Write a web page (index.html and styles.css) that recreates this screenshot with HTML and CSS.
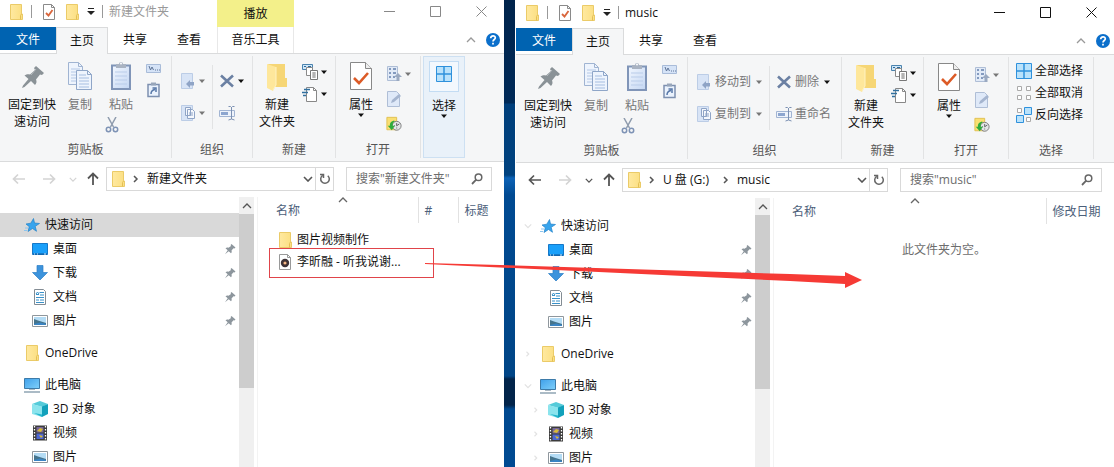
FILE: index.html
```html
<!DOCTYPE html>
<html lang="zh-CN">
<head>
    <meta charset="UTF-8">
    <meta name="viewport" content="width=device-width, initial-scale=1.0">
    <title>music</title>
    <link rel="stylesheet" href="styles.css">
</head>
<body>
    <svg class="sprite" aria-hidden="true">
        <defs>
            <linearGradient id="gFolder" x1="0" x2="1"><stop offset="0" stop-color="#ffe9a0"/><stop offset="1" stop-color="#fbdf82"/></linearGradient>
            <linearGradient id="gScreen" x1="0" x2="1" y2="1"><stop offset="0" stop-color="#3fa0ea"/><stop offset="1" stop-color="#7fd0fb"/></linearGradient>
            <linearGradient id="gClip" x1="0" x2="1" y2="1"><stop offset="0" stop-color="#f2f7ff"/><stop offset="1" stop-color="#c3d6f2"/></linearGradient>
        </defs>
        <symbol id="folder" viewBox="0 0 16 16">
            <path d="M2.500.5h11v9.500h1v5.500h-12z" fill="url(#gFolder)" stroke="#ebcb68"/>
            <path d="M12.500 15.500v-4l1-1.500" fill="none" stroke="#e3bf55"/>
        </symbol>
        <symbol id="check-doc" viewBox="0 0 16 16">
            <path d="M2.500.5h8l3 3v12h-11z" fill="#fff" stroke="#8a8a8a"/><path d="M10.500.5v3h3" fill="none" stroke="#8a8a8a"/>
            <path d="M5 9l2.500 2.500L11.500 6" fill="none" stroke="#d9663c" stroke-width="1.800"/>
        </symbol>
        <symbol id="customize" viewBox="0 0 8 8"><path d="M1 .5h6" stroke="#222"/><path d="M0 3h8L4 7z" fill="#222"/></symbol>
        <symbol id="caret" viewBox="0 0 6 4"><path d="M0 .5h6L3 4z" fill="currentColor"/></symbol>
        <symbol id="win-min" viewBox="0 0 11 11"><path d="M0 5.500h11" stroke="currentColor"/></symbol>
        <symbol id="win-max" viewBox="0 0 11 11"><path d="M.5.5h10v10H.5z" fill="none" stroke="currentColor"/></symbol>
        <symbol id="win-close" viewBox="0 0 11 11"><path d="M.5.5l10 10M10.500.5l-10 10" fill="none" stroke="currentColor"/></symbol>
        <symbol id="up-chev" viewBox="0 0 10 6"><path d="M1 5l4-4 4 4" fill="none" stroke="currentColor" stroke-width="1.300"/></symbol>
        <symbol id="down-chev" viewBox="0 0 10 6"><path d="M1 1l4 4 4-4" fill="none" stroke="currentColor" stroke-width="1.600"/></symbol>
        <symbol id="right-chev" viewBox="0 0 6 8"><path d="M1 1l3 3-3 3" fill="none" stroke="currentColor" stroke-width="1.500"/></symbol>
        <symbol id="pin-big" viewBox="0 0 32 32">
            <path d="M20 5l8 7-2 2-2-.5-4 5c1 2 .5 4-1 5.500l-4-4L8.500 26 6 27l1-2.500 5.500-6.500-4-3.500c2-1.500 4-1.500 5.500-1l5-4.500-1-2z" fill="#8a9297"/>
            <path d="M20 8l-5 6" stroke="#b5bbbf"/>
        </symbol>
        <symbol id="pin" viewBox="0 0 12 12"><path d="M7.500 1l4 3.500-1 1-1-.2-2 2.200c.4 1 .2 2-.5 2.800L4.700 8.200 1 11.300l2.700-4L1.500 5.200c1-.7 2-.8 3-.4L7 3l-.4-1z" fill="#8d969d"/></symbol>
        <symbol id="copy" viewBox="0 0 32 32">
            <g fill="#eef4fd" stroke="#a0b4d2"><path d="M4.500 1.500h10l4 4v18h-14z"/><path d="M14.500 1.500v4h4" fill="none"/></g>
            <path d="M7 8h9M7 11h9M7 14h9M7 17h9M7 20h9" stroke="#b4c8e6"/>
            <g fill="#eef4fd" stroke="#8fa6c8"><path d="M12.500 9.500h11l4 4v15h-15z"/><path d="M23.500 9.500v4h4" fill="none"/></g>
            <path d="M15 14h7M15 17h10M15 20h10M15 23h10M15 26h10" stroke="#a6bee1"/>
        </symbol>
        <symbol id="paste" viewBox="0 0 32 32">
            <path d="M7 4.500h18v23.500H7z" fill="url(#gClip)" stroke="#8095b8" stroke-width="2"/>
            <path d="M10 11h12M10 15h12M10 19h12M10 23h12" stroke="#b9cce9"/>
            <path d="M11 3h3a2 2 0 0 1 4 0h3v4H11z" fill="#a9b3c2"/><circle cx="16" cy="2.500" r="1" fill="#fff"/>
        </symbol>
        <symbol id="scissors" viewBox="0 0 16 16">
            <path d="M4 0l5.500 10M12 0L6.500 10" fill="none" stroke="#8e9bad" stroke-width="1.500"/>
            <circle cx="4.500" cy="12.500" r="2.200" fill="none" stroke="#7e93b5" stroke-width="1.500"/><circle cx="11.500" cy="12.500" r="2.200" fill="none" stroke="#7e93b5" stroke-width="1.500"/>
        </symbol>
        <symbol id="path" viewBox="0 0 16 16"><path d="M.5 3.500h14v8H.5z" fill="#d5e3f7" stroke="#a9bcd9"/><path d="M3 5l1.500 4L6 6l1.500 3M9 9h1M11 9h1M13 9h1" fill="none" stroke="#5f7597"/></symbol>
        <symbol id="shortcut" viewBox="0 0 16 16"><path d="M2 2.500h11v12H2z" fill="#eaf2fd" stroke="#7d90b0" stroke-width="1.500"/><path d="M5 .5h5v3H5z" fill="#98a6ba"/><path d="M5 12c0-3 1-4 4-4.500M6.500 6h3.500v4" fill="none" stroke="#5878a8" stroke-width="1.500"/></symbol>
        <symbol id="move-to" viewBox="0 0 16 16"><path d="M1.500.5h11v15h-11z" fill="#d8e4f6" stroke="#bccde6"/><path d="M14 9v3.500h-4V15L6 11l4-4v2z" fill="#8fa4c6"/></symbol>
        <symbol id="copy-to" viewBox="0 0 16 16"><path d="M1.500.5h11v15h-11z" fill="#d8e4f6" stroke="#bccde6"/><path d="M5.500 2.500h5v8h-5zM7.500 4.500h5l2 2v7h-7z" fill="#f5f8fd" stroke="#8fa4c6"/><path d="M9 8h4M9 10h4" stroke="#8fa4c6"/></symbol>
        <symbol id="delete" viewBox="0 0 16 16"><path d="M2 2.500l12 11M14 2.500l-12 11" stroke="#6b80a3" stroke-width="2.600"/></symbol>
        <symbol id="rename" viewBox="0 0 16 16"><path d="M.5 5.500h15v6H.5z" fill="#eef3fb" stroke="#a2b5d3"/><path d="M2 7h7v3H2z" fill="#8da6cf"/><path d="M9.500 1.500h2l1 1 1-1h2M12.500 2v12M9.500 15l3-1 3 1" fill="none" stroke="#7c91b3"/></symbol>
        <symbol id="new-folder" viewBox="0 0 32 32">
            <path d="M7 3h17v14h2v9H11z" fill="#f6d676"/><path d="M6 3l9 3v18l-3 6-6-3z" fill="#fee79b"/><path d="M15 6v18l-3 5" fill="none" stroke="#fff2c2"/>
        </symbol>
        <symbol id="new-item" viewBox="0 0 16 16"><path d="M.5.500h10v5H.5z" fill="#cfe6f8" stroke="#4a83ae"/><path d="M2 2.500h2M6 2.500h3" stroke="#2a6a9c"/><path d="M4.500 3.500h6v8h-6z" fill="#fff" stroke="#8a8a8a"/><path d="M8.500 6.500h7v9h-7z" fill="#fff" stroke="#777"/><path d="M10 9h4M10 11h4M10 13h4M12 8v6" stroke="#999"/></symbol>
        <symbol id="easy-access" viewBox="0 0 16 16"><path d="M4.500 15.500V1.500h7l3 3v11z" fill="#fff" stroke="#888"/><path d="M11.500 1.500v3h3" fill="none" stroke="#888"/><path d="M2 3.500h6M0 6.500h6M1 9.500h3" stroke="#31709f" stroke-width="1.300"/></symbol>
        <symbol id="props" viewBox="0 0 32 32"><path d="M5.500 1.500h15l6 6v21h-21z" fill="#fff" stroke="#888"/><path d="M20.500 1.500v6h6" fill="#eee" stroke="#888"/><path d="M9 17l5 5 9-10" fill="none" stroke="#dc5b27" stroke-width="2.600"/></symbol>
        <symbol id="open" viewBox="0 0 16 16"><path d="M1.500.5h10v14h-10z" fill="#e1eaf7" stroke="#afbed6"/><path d="M3 3h2M3 7h2M3 11h2M7 3h3M7 7h3M7 11h2" stroke="#839abf" stroke-width="2"/><path d="M12 7l4 4h-2.500v4h-3v-4H8z" fill="#9aa9c1"/></symbol>
        <symbol id="edit" viewBox="0 0 16 16"><path d="M1.500.5h9l3 3v12h-12z" fill="#dfe9f8" stroke="#afbed6"/><path d="M5 12l1-3 7-6 2 2-7 6z" fill="#a5b5cf"/></symbol>
        <symbol id="history" viewBox="0 0 18 16"><path d="M1 .5h11v14H1z" fill="#f9df72" stroke="#dfbd4c"/><circle cx="12" cy="10" r="5" fill="#e2e5e7" stroke="#777"/><path d="M12 7v3l3-2M9 10h1M12 13v-1" fill="none" stroke="#555"/><path d="M9 4c-4 1-5 4-4.500 6H2l4.500 5L10 10H7.500c0-3 .5-4 2.500-5z" fill="#2fab3c"/></symbol>
        <symbol id="sel-all" viewBox="0 0 16 16"><path d="M.5.5h7.500v7.500H.5zM8 .5h7.500v7.500H8zM.5 8h7.500v7.500H.5zM8 8h7.500v7.500H8z" fill="#b9e2fb" stroke="#2f91dc"/></symbol>
        <symbol id="sel-none" viewBox="0 0 16 16"><path d="M1.500 1.500h4v4h-4zM10.500 1.500h4v4h-4zM1.500 10.500h4v4h-4zM10.500 10.500h4v4h-4z" fill="#fff" stroke="#aaa"/></symbol>
        <symbol id="sel-inv" viewBox="0 0 16 16"><path d="M1.500 1.500h4v4h-4zM10.500 10.500h4v4h-4z" fill="#fff" stroke="#aaa"/><path d="M8.500.5h7v7h-7zM.5 8.500h7v7h-7z" fill="#b9e2fb" stroke="#2f91dc"/></symbol>
        <symbol id="arrow-left" viewBox="0 0 14 14"><path d="M1.500 7H13M6 2.500L1.500 7 6 11.500" fill="none" stroke="currentColor" stroke-width="1.700"/></symbol>
        <symbol id="arrow-right" viewBox="0 0 14 14"><path d="M1 7h11.500M8 2.500L12.500 7 8 11.500" fill="none" stroke="currentColor" stroke-width="1.700"/></symbol>
        <symbol id="arrow-up" viewBox="0 0 14 14"><path d="M7 1.500V13M2 6.500l5-5 5 5" fill="none" stroke="currentColor" stroke-width="1.800"/></symbol>
        <symbol id="refresh" viewBox="0 0 12 12"><path d="M3.500 2.500A4.300 4.300 0 1 0 8.800 2.700M1 1.500h3.500V5" fill="none" stroke="#666" stroke-width="1.500"/></symbol>
        <symbol id="search" viewBox="0 0 12 12"><circle cx="7.500" cy="4.300" r="3.300" fill="none" stroke="#666" stroke-width="1.500"/><path d="M5.200 6.700L1 11" stroke="#666" stroke-width="1.800"/></symbol>
        <symbol id="star" viewBox="0 0 16 16"><path d="M9.500 1.500l1 4.500 5 .5-4.300 2.800 1.300 5-4-2.800L4 14.500l1.300-4.800L2 7l4.800-.8z" fill="#37a4ed" stroke="#2383c9" stroke-width=".7"/><path d="M1 11h3M0 13.500h3" stroke="#8dc5ee"/></symbol>
        <symbol id="desk" viewBox="0 0 16 16"><path d="M.5 2.500h15v11H.5z" fill="#1aa0fa" stroke="#1678c8"/><path d="M1 13h14" stroke="#0e5798"/><path d="M2 13h1M5 13h1M12 13h2" stroke="#d9efff"/></symbol>
        <symbol id="download" viewBox="0 0 16 16"><path d="M5 .5h6v7h4.500L8 15 .5 7.500H5z" fill="#3c93dc" stroke="#2d7ec5" stroke-width=".7"/></symbol>
        <symbol id="doc" viewBox="0 0 16 16"><path d="M2.500.5h9l2 2v13h-11z" fill="#fff" stroke="#838c94"/><path d="M7.500 3.500H12M4 5.500h3M8 6h4M4 8.500h8M4 11h3M8 11h4M4 13.500h8" stroke="#3991c9"/><path d="M4 5l1.500-2L7 5" fill="none" stroke="#3991c9"/></symbol>
        <symbol id="pic" viewBox="0 0 16 16"><path d="M.5 2.500h15v11H.5z" fill="#fff" stroke="#8f979d"/><path d="M2 4h12v8H2z" fill="#b4dcf5"/><path d="M2 6l4 1.500 8 2.500v2H2z" fill="#45748c"/><path d="M2 11l6-1.500 6 1.500v1H2z" fill="#3a84c4"/></symbol>
        <symbol id="pc" viewBox="0 0 16 16"><path d="M.5 1.500h15v10H.5z" fill="url(#gScreen)" stroke="#3d7ba9"/><path d="M5 12.500h6" stroke="#abb9c3"/><path d="M0 15h16" stroke="#7d97a8" stroke-width="1.300"/></symbol>
        <symbol id="cube" viewBox="0 0 16 16"><path d="M0 3l8-3 8 3-6 3z" fill="#55cbd9"/><path d="M0 3l10 2.500V16L0 13z" fill="#8be4ed"/><path d="M10 5.500L16 3v10l-6 3z" fill="#12a1bb"/><path d="M2 12l8 1.500V16z" fill="#24b6cd"/></symbol>
        <symbol id="video" viewBox="0 0 16 16"><path d="M1 .5h14v15H1z" fill="#3b3b3b"/><path d="M2.500 1v14M13.500 1v14" stroke="#fff" stroke-width="1.300" stroke-dasharray="1.500 1.500"/><path d="M4.500 2h7v5.500h-7z" fill="#77679a"/><path d="M4.500 8.500h7V14h-7z" fill="#4d67d2"/><path d="M5 6l3-3 3 1-2 3zM7 10l4 1-2 2z" fill="#d8ba36"/></symbol>
        <symbol id="music" viewBox="0 0 16 16"><path d="M2.500.5h8l3 3v12h-11z" fill="#fff" stroke="#999"/><path d="M10.500.5v3h3" fill="none" stroke="#999"/><circle cx="8" cy="9" r="4.200" fill="#3e3236"/><circle cx="8" cy="9" r="1.600" fill="#f1a468"/><circle cx="8" cy="9" r=".6" fill="#fff"/></symbol>
        <symbol id="help" viewBox="0 0 16 16"><circle cx="8" cy="8" r="7" fill="#0b6fcb"/><path d="M5.700 6.200C5.700 3 10.500 3.200 10.300 6 10.200 7.500 8 7.500 8 9.500M8 10.800v1.700" fill="none" stroke="#fff" stroke-width="1.700"/></symbol>
    </svg>

    <main class="desktop">
        <section class="window window-source" aria-label="新建文件夹">
            <header class="titlebar">
                <div class="quick-bar">
                    <svg class="icon"><use href="#folder"/></svg>
                    <span class="bar"></span>
                    <button class="btn" aria-label="属性"><svg class="icon"><use href="#check-doc"/></svg></button>
                    <button class="btn" aria-label="新建"><svg class="icon"><use href="#folder"/></svg></button>
                    <button class="btn" aria-label="自定义"><svg class="icon-8"><use href="#customize"/></svg></button>
                    <span class="bar"></span>
                </div>
                <span class="title">新建文件夹</span>
                <span class="context-label">播放</span>
                <div class="controls">
                    <button class="btn" aria-label="最小化"><svg><use href="#win-min"/></svg></button>
                    <button class="btn" aria-label="最大化"><svg><use href="#win-max"/></svg></button>
                    <button class="btn" aria-label="关闭"><svg><use href="#win-close"/></svg></button>
                </div>
            </header>
            <nav class="tabs">
                <button class="tab tab-file">文件</button>
                <button class="tab tab-active">主页</button>
                <button class="tab">共享</button>
                <button class="tab">查看</button>
                <button class="tab tab-context">音乐工具</button>
                <div class="tab-tools">
                    <button class="btn" aria-label="折叠功能区"><svg class="chev"><use href="#up-chev"/></svg></button>
                    <button class="btn" aria-label="帮助"><svg class="icon"><use href="#help"/></svg></button>
                </div>
            </nav>
            <div class="ribbon">
                <div class="group group-clip">
                    <div class="group-body">
                        <button class="big big-pin"><svg class="icon-32"><use href="#pin-big"/></svg>固定到快<br>速访问</button>
                        <button class="big big-copy muted"><svg class="icon-32"><use href="#copy"/></svg>复制</button>
                        <div class="stack">
                            <button class="big muted"><svg class="icon-32"><use href="#paste"/></svg>粘贴</button>
                            <button class="btn cut" aria-label="剪切"><svg class="icon"><use href="#scissors"/></svg></button>
                        </div>
                        <div class="stack stack-small">
                            <button class="btn" aria-label="复制路径"><svg class="icon"><use href="#path"/></svg></button>
                            <button class="btn" aria-label="粘贴快捷方式"><svg class="icon"><use href="#shortcut"/></svg></button>
                        </div>
                    </div>
                    <div class="group-label">剪贴板</div>
                </div>
                <div class="group group-org">
                    <div class="group-body">
                        <div class="rows">
                            <button class="row-btn muted" aria-label="移动到"><svg class="icon"><use href="#move-to"/></svg><svg class="caret"><use href="#caret"/></svg></button>
                            <button class="row-btn muted" aria-label="复制到"><svg class="icon"><use href="#copy-to"/></svg><svg class="caret"><use href="#caret"/></svg></button>
                        </div>
                        <div class="rows rows-next">
                            <button class="row-btn" aria-label="删除"><svg class="icon"><use href="#delete"/></svg><svg class="caret"><use href="#caret"/></svg></button>
                            <button class="row-btn" aria-label="重命名"><svg class="icon"><use href="#rename"/></svg></button>
                        </div>
                    </div>
                    <div class="group-label">组织</div>
                </div>
                <div class="group group-new">
                    <div class="group-body">
                        <button class="big"><svg class="icon-32"><use href="#new-folder"/></svg>新建<br>文件夹</button>
                        <div class="stack stack-items">
                            <button class="row-btn" aria-label="新建项目"><svg class="icon"><use href="#new-item"/></svg><svg class="caret"><use href="#caret"/></svg></button>
                            <button class="row-btn" aria-label="轻松访问"><svg class="icon"><use href="#easy-access"/></svg><svg class="caret"><use href="#caret"/></svg></button>
                        </div>
                    </div>
                    <div class="group-label">新建</div>
                </div>
                <div class="group group-open">
                    <div class="group-body">
                        <button class="big"><svg class="icon-32"><use href="#props"/></svg>属性<svg class="caret"><use href="#caret"/></svg></button>
                        <div class="stack stack-open">
                            <button class="row-btn muted" aria-label="打开"><svg class="icon"><use href="#open"/></svg><svg class="caret"><use href="#caret"/></svg></button>
                            <button class="row-btn" aria-label="编辑"><svg class="icon"><use href="#edit"/></svg></button>
                            <button class="row-btn" aria-label="历史记录"><svg class="icon"><use href="#history"/></svg></button>
                        </div>
                    </div>
                    <div class="group-label">打开</div>
                </div>
                <button class="group-collapsed"><span class="collapsed-icon"><svg class="icon"><use href="#sel-all"/></svg></span>选择<svg class="caret"><use href="#caret"/></svg></button>
            </div>
            <div class="address-row">
                <button class="btn nav-btn off" aria-label="后退"><svg><use href="#arrow-left"/></svg></button>
                <button class="btn nav-btn off" aria-label="前进"><svg><use href="#arrow-right"/></svg></button>
                <button class="btn recent off" aria-label="最近位置"><svg><use href="#down-chev"/></svg></button>
                <button class="btn nav-btn" aria-label="上移"><svg><use href="#arrow-up"/></svg></button>
                <div class="address">
                    <svg class="icon"><use href="#folder"/></svg>
                    <svg class="crumb-sep"><use href="#right-chev"/></svg>
                    <a href="#" class="crumb">新建文件夹</a>
                    <button class="btn drop" aria-label="以前的位置"><svg class="chev"><use href="#down-chev"/></svg></button>
                    <button class="btn refresh" aria-label="刷新"><svg><use href="#refresh"/></svg></button>
                </div>
                <label class="search"><input type="text" aria-label="搜索" placeholder='搜索"新建文件夹"'><svg><use href="#search"/></svg></label>
            </div>
            <div class="body">
                <nav class="tree">
                    <a href="#" class="node selected"><span class="twist"></span><svg class="icon"><use href="#star"/></svg>快速访问</a>
                    <a href="#" class="node child"><span class="twist"></span><svg class="icon"><use href="#desk"/></svg>桌面<svg class="pin"><use href="#pin"/></svg></a>
                    <a href="#" class="node child"><span class="twist"></span><svg class="icon"><use href="#download"/></svg>下载<svg class="pin"><use href="#pin"/></svg></a>
                    <a href="#" class="node child"><span class="twist"></span><svg class="icon"><use href="#doc"/></svg>文档<svg class="pin"><use href="#pin"/></svg></a>
                    <a href="#" class="node child"><span class="twist"></span><svg class="icon"><use href="#pic"/></svg>图片<svg class="pin"><use href="#pin"/></svg></a>
                    <a href="#" class="node root"><span class="twist"></span><svg class="icon"><use href="#folder"/></svg>OneDrive</a>
                    <a href="#" class="node root"><span class="twist"></span><svg class="icon"><use href="#pc"/></svg>此电脑</a>
                    <a href="#" class="node child"><span class="twist"></span><svg class="icon"><use href="#cube"/></svg>3D 对象</a>
                    <a href="#" class="node child"><span class="twist"></span><svg class="icon"><use href="#video"/></svg>视频</a>
                    <a href="#" class="node child"><span class="twist"></span><svg class="icon"><use href="#pic"/></svg>图片</a>
                </nav>
                <div class="scrollbar"><svg class="chev"><use href="#up-chev"/></svg><div class="thumb"></div></div>
                <div class="files">
                    <table class="list">
                        <thead>
                            <tr><th class="col-name">名称<svg class="sort"><use href="#up-chev"/></svg></th><th class="col-num">#</th><th>标题</th></tr>
                        </thead>
                        <tbody>
                            <tr><td colspan="3"><span class="file"><svg class="icon"><use href="#folder"/></svg>图片视频制作</span></td></tr>
                            <tr><td colspan="3"><span class="file marked"><svg class="icon"><use href="#music"/></svg>李昕融 - 听我说谢...</span></td></tr>
                        </tbody>
                    </table>
                </div>
            </div>
        </section>

        <section class="window window-target" aria-label="music">
            <header class="titlebar">
                <div class="quick-bar">
                    <svg class="icon"><use href="#folder"/></svg>
                    <span class="bar"></span>
                    <button class="btn" aria-label="属性"><svg class="icon"><use href="#check-doc"/></svg></button>
                    <button class="btn" aria-label="新建"><svg class="icon"><use href="#folder"/></svg></button>
                    <button class="btn" aria-label="自定义"><svg class="icon-8"><use href="#customize"/></svg></button>
                    <span class="bar"></span>
                </div>
                <span class="title">music</span>
                <div class="controls">
                    <button class="btn" aria-label="最小化"><svg><use href="#win-min"/></svg></button>
                    <button class="btn" aria-label="最大化"><svg><use href="#win-max"/></svg></button>
                    <button class="btn" aria-label="关闭"><svg><use href="#win-close"/></svg></button>
                </div>
            </header>
            <nav class="tabs">
                <button class="tab tab-file">文件</button>
                <button class="tab tab-active">主页</button>
                <button class="tab">共享</button>
                <button class="tab">查看</button>
                <div class="tab-tools">
                    <button class="btn" aria-label="折叠功能区"><svg class="chev"><use href="#up-chev"/></svg></button>
                    <button class="btn" aria-label="帮助"><svg class="icon"><use href="#help"/></svg></button>
                </div>
            </nav>
            <div class="ribbon">
                <div class="group group-clip">
                    <div class="group-body">
                        <button class="big big-pin"><svg class="icon-32"><use href="#pin-big"/></svg>固定到快<br>速访问</button>
                        <button class="big big-copy muted"><svg class="icon-32"><use href="#copy"/></svg>复制</button>
                        <div class="stack">
                            <button class="big muted"><svg class="icon-32"><use href="#paste"/></svg>粘贴</button>
                            <button class="btn cut" aria-label="剪切"><svg class="icon"><use href="#scissors"/></svg></button>
                        </div>
                        <div class="stack stack-small">
                            <button class="btn" aria-label="复制路径"><svg class="icon"><use href="#path"/></svg></button>
                            <button class="btn" aria-label="粘贴快捷方式"><svg class="icon"><use href="#shortcut"/></svg></button>
                        </div>
                    </div>
                    <div class="group-label">剪贴板</div>
                </div>
                <div class="group group-org">
                    <div class="group-body">
                        <div class="rows">
                            <button class="row-btn muted"><svg class="icon"><use href="#move-to"/></svg>移动到<svg class="caret"><use href="#caret"/></svg></button>
                            <button class="row-btn muted"><svg class="icon"><use href="#copy-to"/></svg>复制到<svg class="caret"><use href="#caret"/></svg></button>
                        </div>
                        <div class="rows rows-next">
                            <button class="row-btn"><svg class="icon"><use href="#delete"/></svg><span class="muted">删除</span><svg class="caret"><use href="#caret"/></svg></button>
                            <button class="row-btn muted"><svg class="icon"><use href="#rename"/></svg>重命名</button>
                        </div>
                    </div>
                    <div class="group-label">组织</div>
                </div>
                <div class="group group-new">
                    <div class="group-body">
                        <button class="big"><svg class="icon-32"><use href="#new-folder"/></svg>新建<br>文件夹</button>
                        <div class="stack stack-items">
                            <button class="row-btn" aria-label="新建项目"><svg class="icon"><use href="#new-item"/></svg><svg class="caret"><use href="#caret"/></svg></button>
                            <button class="row-btn" aria-label="轻松访问"><svg class="icon"><use href="#easy-access"/></svg><svg class="caret"><use href="#caret"/></svg></button>
                        </div>
                    </div>
                    <div class="group-label">新建</div>
                </div>
                <div class="group group-open">
                    <div class="group-body">
                        <button class="big"><svg class="icon-32"><use href="#props"/></svg>属性<svg class="caret"><use href="#caret"/></svg></button>
                        <div class="stack stack-open">
                            <button class="row-btn muted" aria-label="打开"><svg class="icon"><use href="#open"/></svg><svg class="caret"><use href="#caret"/></svg></button>
                            <button class="row-btn" aria-label="编辑"><svg class="icon"><use href="#edit"/></svg></button>
                            <button class="row-btn" aria-label="历史记录"><svg class="icon"><use href="#history"/></svg></button>
                        </div>
                    </div>
                    <div class="group-label">打开</div>
                </div>
                <div class="group group-select">
                    <div class="group-body">
                        <div class="stack">
                            <button class="row-btn"><svg class="icon"><use href="#sel-all"/></svg>全部选择</button>
                            <button class="row-btn"><svg class="icon"><use href="#sel-none"/></svg>全部取消</button>
                            <button class="row-btn"><svg class="icon"><use href="#sel-inv"/></svg>反向选择</button>
                        </div>
                    </div>
                    <div class="group-label">选择</div>
                </div>
            </div>
            <div class="address-row">
                <button class="btn nav-btn" aria-label="后退"><svg><use href="#arrow-left"/></svg></button>
                <button class="btn nav-btn off" aria-label="前进"><svg><use href="#arrow-right"/></svg></button>
                <button class="btn recent" aria-label="最近位置"><svg><use href="#down-chev"/></svg></button>
                <button class="btn nav-btn" aria-label="上移"><svg><use href="#arrow-up"/></svg></button>
                <div class="address">
                    <svg class="icon"><use href="#folder"/></svg>
                    <svg class="crumb-sep"><use href="#right-chev"/></svg>
                    <a href="#" class="crumb">U 盘 (G:)</a>
                    <svg class="crumb-sep"><use href="#right-chev"/></svg>
                    <a href="#" class="crumb">music</a>
                    <button class="btn drop" aria-label="以前的位置"><svg class="chev"><use href="#down-chev"/></svg></button>
                    <button class="btn refresh" aria-label="刷新"><svg><use href="#refresh"/></svg></button>
                </div>
                <label class="search"><input type="text" aria-label="搜索" placeholder='搜索"music"'><svg><use href="#search"/></svg></label>
            </div>
            <div class="body">
                <nav class="tree">
                    <a href="#" class="node"><svg class="twist"><use href="#down-chev"/></svg><svg class="icon"><use href="#star"/></svg>快速访问</a>
                    <a href="#" class="node child"><span class="twist"></span><svg class="icon"><use href="#desk"/></svg>桌面<svg class="pin"><use href="#pin"/></svg></a>
                    <a href="#" class="node child"><span class="twist"></span><svg class="icon"><use href="#download"/></svg>下载<svg class="pin"><use href="#pin"/></svg></a>
                    <a href="#" class="node child"><span class="twist"></span><svg class="icon"><use href="#doc"/></svg>文档<svg class="pin"><use href="#pin"/></svg></a>
                    <a href="#" class="node child"><span class="twist"></span><svg class="icon"><use href="#pic"/></svg>图片<svg class="pin"><use href="#pin"/></svg></a>
                    <a href="#" class="node root"><svg class="twist"><use href="#right-chev"/></svg><svg class="icon"><use href="#folder"/></svg>OneDrive</a>
                    <a href="#" class="node root"><svg class="twist"><use href="#down-chev"/></svg><svg class="icon"><use href="#pc"/></svg>此电脑</a>
                    <a href="#" class="node child"><svg class="twist"><use href="#right-chev"/></svg><svg class="icon"><use href="#cube"/></svg>3D 对象</a>
                    <a href="#" class="node child"><svg class="twist"><use href="#right-chev"/></svg><svg class="icon"><use href="#video"/></svg>视频</a>
                    <a href="#" class="node child"><svg class="twist"><use href="#right-chev"/></svg><svg class="icon"><use href="#pic"/></svg>图片</a>
                </nav>
                <div class="scrollbar"><svg class="chev"><use href="#up-chev"/></svg><div class="thumb"></div></div>
                <div class="files">
                    <table class="list">
                        <thead>
                            <tr><th>名称<svg class="sort"><use href="#up-chev"/></svg></th><th class="col-date">修改日期</th></tr>
                        </thead>
                    </table>
                    <p class="empty">此文件夹为空。</p>
                </div>
            </div>
        </section>
        <svg class="drag-arrow" viewBox="0 0 1114 28" preserveAspectRatio="none" aria-hidden="true"><path d="M425 1l75 2 290 9 55 2v-4l17 8-17 8v-4l-55-3-290-13.500L425 2z" fill="#f63a35"/></svg>
    </main>
</body>
</html>
```
FILE: styles.css
```css
:root {
    --ribbon: #f5f6f7;
    --line: #dadbdc;
    --text: #111;
    --muted: #777;
    --accent: #0063b1;
}
* {
    box-sizing: border-box;
}
html, body {
    height: 100%;
    margin: 0;
    overflow: hidden;
}
body {
    font-family: "Open Sans", "Noto Sans CJK SC", sans-serif;
    font-size: 12px;
    line-height: 16px;
    color: var(--text);
}
button, input {
    font: inherit;
    color: inherit;
    border: 0;
    padding: 0;
    background: none;
}
a {
    color: inherit;
    text-decoration: none;
}
svg {
    display: block;
    flex: none;
}
.sprite {
    position: absolute;
    width: 0;
    height: 0;
}
.icon {
    width: 16px;
    height: 16px;
}
.icon-8 {
    width: 8px;
    height: 8px;
}
.icon-32 {
    width: 32px;
    height: 32px;
}
.caret {
    width: 6px;
    height: 4px;
}
.chev {
    width: 10px;
    height: 6px;
}
.btn {
    display: flex;
    align-items: center;
    justify-content: center;
}
.muted {
    color: var(--muted);
}

.desktop {
    position: relative;
    height: 100%;
    display: grid;
    grid-template-columns: minmax(0, 504fr) minmax(0, 599fr);
    grid-template-rows: minmax(0, 1fr);
    column-gap: 11px;
    background: linear-gradient(#00244c 0, #002a58 103px, #003f7b 104px, #00427f 175px, #0c62b6 178px, #004a92 195px, #004586 376px, #02244a 379px, #02244a 405px, #00498f 409px, #004a92);
}
.window {
    display: flex;
    flex-direction: column;
    min-width: 0;
    background: #fff;
    overflow: hidden;
}
.window-target {
    padding: 1px 0 0 1px;
}

/* title bar */
.titlebar {
    display: flex;
    align-items: stretch;
    height: 27px;
}
.quick-bar {
    display: flex;
    align-items: center;
    gap: 7px;
    padding: 0 6px 4px 8px;
}
.bar {
    width: 1px;
    height: 13px;
    margin-right: 2px;
    background: #999;
}
.bar:last-child {
    margin-right: 0;
}
.title {
    width: 108px;
    padding-top: 4px;
}
.window-source .title {
    color: #999;
}
.context-label {
    width: 77px;
    padding-top: 6px;
    text-align: center;
    background: #f3f08a;
}
.controls {
    display: flex;
    margin-left: auto;
    padding-bottom: 4px;
}
.controls .btn {
    width: 46px;
}
.controls svg {
    width: 11px;
    height: 11px;
}
.window-source .controls {
    color: #888;
}

/* tabs */
.tabs {
    display: flex;
    height: 27px;
    border-bottom: 1px solid var(--line);
}
.tab {
    width: 54px;
}
.tab-file {
    width: 56px;
    height: 23px;
    padding-top: 2px;
    background: var(--accent);
    color: #fff;
}
.tab-active {
    width: 52px;
    height: 27px;
    background: var(--ribbon);
    border: 1px solid var(--line);
    border-bottom: 0;
}
.tab-context {
    width: 77px;
    margin-left: 1px;
    border: 1px solid #e8e8e8;
    border-width: 0 1px;
}
.tab-tools {
    display: flex;
    gap: 9px;
    margin-left: auto;
    padding-right: 3px;
    color: #999;
}

/* ribbon */
.ribbon {
    display: flex;
    height: 108px;
    background: var(--ribbon);
    border-bottom: 1px solid var(--line);
}
.group {
    display: flex;
    flex-direction: column;
    margin: 2px 0 3px;
    border-right: 1px solid #e2e3e4;
}
.group-body {
    display: flex;
    flex: 1;
    padding: 5px 0 0 8px;
}
.group-label {
    height: 16px;
    text-align: center;
    color: #555;
}
.group-clip {
    width: 172px;
}
.group-org {
    width: 81px;
}
.group-new {
    width: 83px;
}
.group-new .group-body {
    padding-left: 6px;
}
.group-open,
.group-select {
    width: 85px;
}
.window-target .group-org {
    width: 154px;
}
.window-target .group-new {
    width: 82px;
}
.group-select .group-body {
    padding: 3px 0 0 7px;
}
.big {
    display: flex;
    flex-direction: column;
    align-items: center;
    align-self: flex-start;
    width: 34px;
    line-height: 17px;
    white-space: nowrap;
}
.big .icon-32 {
    margin-bottom: 3px;
}
.big-pin {
    width: 48px;
}
.big-copy {
    margin: 0 7px;
}
.stack {
    display: flex;
    flex-direction: column;
}
.cut {
    width: 16px;
    margin-top: 4px;
}
.stack-small {
    gap: 5px;
    margin-left: 8px;
}
.group-new .big {
    width: 36px;
}
.stack-items {
    margin-left: 7px;
}
.row-btn {
    display: flex;
    align-items: center;
    gap: 3px;
    height: 22px;
    white-space: nowrap;
}
.rows {
    display: flex;
    flex-direction: column;
    margin-top: 4px;
}
.rows .row-btn {
    height: 32px;
}
.rows-next {
    margin-left: 7px;
    padding-left: 6px;
    align-self: flex-start;
    border-left: 1px solid #e2e3e4;
}
.window-target .rows .caret {
    margin-left: 2px;
}
.stack-open {
    margin-left: 8px;
}
.stack-open .row-btn {
    height: 25px;
}
.group-collapsed {
    display: flex;
    flex-direction: column;
    align-items: center;
    width: 42px;
    margin: 2px 0 3px 2px;
    padding-top: 4px;
    line-height: 17px;
    background: #e9f1f9;
    border: 1px solid #cde0f2;
}
.collapsed-icon {
    display: flex;
    justify-content: center;
    width: 30px;
    height: 31px;
    margin-bottom: 5px;
    padding-top: 4px;
    background: #f3f8fd;
    border: 1px solid #c3dcf3;
}

/* address row */
.address-row {
    display: flex;
    align-items: center;
    height: 34px;
    padding: 0 12px;
    color: #555;
}
.nav-btn {
    width: 14px;
}
.nav-btn svg {
    width: 14px;
    height: 14px;
}
.nav-btn + .nav-btn {
    margin-left: 16px;
}
.recent {
    width: 8px;
    margin: 0 9px 0 13px;
}
.recent svg {
    width: 8px;
    height: 5px;
}
.off {
    color: #d4d4d4;
}
.address {
    display: flex;
    align-items: center;
    flex: 1;
    min-width: 0;
    height: 24px;
    margin-left: 6px;
    padding-left: 3px;
    border: 1px solid #d9d9d9;
    color: var(--text);
}
.crumb-sep {
    width: 6px;
    height: 8px;
    margin: 0 8px 0 7px;
    color: #555;
}
.crumb + .crumb-sep {
    margin-left: 14px;
}
.crumb {
    white-space: nowrap;
}
.drop {
    width: 14px;
    margin-left: auto;
    color: #555;
}
.refresh {
    align-self: stretch;
    width: 18px;
    border-left: 1px solid #d9d9d9;
}
.refresh svg,
.search svg {
    width: 12px;
    height: 12px;
}
.search {
    display: flex;
    align-items: center;
    width: 146px;
    height: 24px;
    margin-left: 12px;
    padding: 0 8px 0 9px;
    border: 1px solid #d9d9d9;
}
.window-target .search {
    width: 202px;
}
.search input {
    flex: 1;
    min-width: 0;
    outline: 0;
}
.search input::placeholder {
    color: #6d6d6d;
    opacity: 1;
}

/* folder tree and file list */
.body {
    display: flex;
    flex: 1;
    min-height: 0;
    padding-top: 1px;
}
.tree {
    width: 239px;
    padding-top: 16px;
    overflow: hidden;
}
.node {
    display: flex;
    align-items: center;
    height: 24px;
    padding: 0 3px 0 8px;
}
.node.child {
    padding-left: 16px;
}
.node.root {
    margin-top: 8px;
}
.node.selected {
    background: #d9d9d9;
}
.node .icon {
    margin-right: 5px;
}
.twist {
    width: 8px;
    height: 6px;
    margin-right: 8px;
    color: #e2e2e2;
}
.pin {
    width: 12px;
    height: 12px;
    margin-left: auto;
}
.scrollbar {
    display: flex;
    flex-direction: column;
    align-items: center;
    width: 15px;
    padding-top: 6px;
    background: #f0f0f0;
    color: #555;
}
.thumb {
    width: 15px;
    height: 174px;
    margin-top: 5px;
    background: #cdcdcd;
}
.files {
    flex: 1;
    min-width: 0;
    margin-left: 3px;
    border-left: 1px solid #f3f3f3;
}
.list {
    width: 100%;
    table-layout: fixed;
    border-collapse: collapse;
}
.list th {
    position: relative;
    height: 26px;
    padding: 2px 0 0 6px;
    border-left: 1px solid #e2e2e2;
    font-weight: 400;
    text-align: left;
    color: #4c607a;
}
.list th:first-child {
    padding-left: 18px;
    border-left: 0;
}
.list .col-name {
    width: 160px;
}
.list .col-num {
    width: 40px;
}
.list .col-date {
    width: 68px;
}
.sort {
    position: absolute;
    top: 0;
    left: 50%;
    width: 10px;
    height: 6px;
    color: #666;
}
.list td {
    padding: 0 0 0 19px;
}
tbody::before {
    content: "";
    display: block;
    height: 6px;
}
.file {
    position: relative;
    display: flex;
    align-items: center;
    gap: 4px;
    height: 22px;
    white-space: nowrap;
}
.marked::after {
    content: "";
    position: absolute;
    top: -3px;
    left: -8px;
    width: 163px;
    height: 28px;
    border: 1px solid #e0444a;
}
.empty {
    margin: 18px 0 0;
    text-align: center;
    color: #6d6d6d;
}
.drag-arrow {
    position: absolute;
    top: 262px;
    left: 0;
    width: 100%;
    height: 28px;
    pointer-events: none;
}
```
